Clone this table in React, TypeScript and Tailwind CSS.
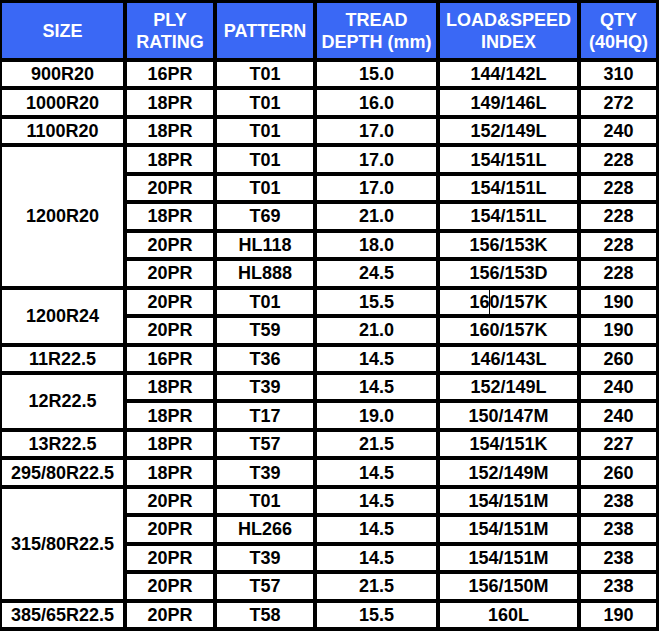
import { Fragment } from 'react';

type Row = { ply: string; pattern: string; tread: string; load: string; qty: string; caret?: boolean };
type Group = { size: string; rows: Row[] };

const groups: Group[] = [
  { size: '900R20', rows: [{ ply: '16PR', pattern: 'T01', tread: '15.0', load: '144/142L', qty: '310' }] },
  { size: '1000R20', rows: [{ ply: '18PR', pattern: 'T01', tread: '16.0', load: '149/146L', qty: '272' }] },
  { size: '1100R20', rows: [{ ply: '18PR', pattern: 'T01', tread: '17.0', load: '152/149L', qty: '240' }] },
  {
    size: '1200R20',
    rows: [
      { ply: '18PR', pattern: 'T01', tread: '17.0', load: '154/151L', qty: '228' },
      { ply: '20PR', pattern: 'T01', tread: '17.0', load: '154/151L', qty: '228' },
      { ply: '18PR', pattern: 'T69', tread: '21.0', load: '154/151L', qty: '228' },
      { ply: '20PR', pattern: 'HL118', tread: '18.0', load: '156/153K', qty: '228' },
      { ply: '20PR', pattern: 'HL888', tread: '24.5', load: '156/153D', qty: '228' },
    ],
  },
  {
    size: '1200R24',
    rows: [
      { ply: '20PR', pattern: 'T01', tread: '15.5', load: '160/157K', qty: '190', caret: true },
      { ply: '20PR', pattern: 'T59', tread: '21.0', load: '160/157K', qty: '190' },
    ],
  },
  { size: '11R22.5', rows: [{ ply: '16PR', pattern: 'T36', tread: '14.5', load: '146/143L', qty: '260' }] },
  {
    size: '12R22.5',
    rows: [
      { ply: '18PR', pattern: 'T39', tread: '14.5', load: '152/149L', qty: '240' },
      { ply: '18PR', pattern: 'T17', tread: '19.0', load: '150/147M', qty: '240' },
    ],
  },
  { size: '13R22.5', rows: [{ ply: '18PR', pattern: 'T57', tread: '21.5', load: '154/151K', qty: '227' }] },
  { size: '295/80R22.5', rows: [{ ply: '18PR', pattern: 'T39', tread: '14.5', load: '152/149M', qty: '260' }] },
  {
    size: '315/80R22.5',
    rows: [
      { ply: '20PR', pattern: 'T01', tread: '14.5', load: '154/151M', qty: '238' },
      { ply: '20PR', pattern: 'HL266', tread: '14.5', load: '154/151M', qty: '238' },
      { ply: '20PR', pattern: 'T39', tread: '14.5', load: '154/151M', qty: '238' },
      { ply: '20PR', pattern: 'T57', tread: '21.5', load: '156/150M', qty: '238' },
    ],
  },
  { size: '385/65R22.5', rows: [{ ply: '20PR', pattern: 'T58', tread: '15.5', load: '160L', qty: '190' }] },
];

const spanClass: Record<number, string> = {
  1: 'row-span-1',
  2: 'row-span-2',
  4: 'row-span-4',
  5: 'row-span-5',
};

function Head({ children }: { children: React.ReactNode }) {
  return (
    <div className="flex items-center justify-center bg-[#3a68f5] text-center text-[18px] font-bold leading-[22px] text-white">
      {children}
    </div>
  );
}

function Cell({ children, className = '' }: { children: React.ReactNode; className?: string }) {
  return (
    <div className={`relative flex items-center justify-center bg-white text-[18px] font-bold leading-none text-black ${className}`}>
      {children}
    </div>
  );
}

export default function App() {
  return (
    <div
      className="grid h-[631px] w-[659px] grid-cols-[121px_86px_96px_119px_137px_75px] grid-rows-[55px_repeat(20,1fr)] gap-x-[4px] gap-y-[4px] bg-black pb-[4px] pl-[2px] pr-[3px] pt-[3px]"
      style={{ fontFamily: '"Liberation Sans", Arial, sans-serif' }}
    >
      {/* Header */}
      <Head>SIZE</Head>
      <Head>PLY<br />RATING</Head>
      <Head>PATTERN</Head>
      <Head>TREAD<br />DEPTH (mm)</Head>
      <Head>LOAD&amp;SPEED<br />INDEX</Head>
      <Head>QTY<br />(40HQ)</Head>

      {/* Body */}
      {groups.map((g) =>
        g.rows.map((r, i) => (
          <Fragment key={`${g.size}-${i}`}>
            {i === 0 && (
              <Cell className={`col-start-1 ${spanClass[g.rows.length]}`}>{g.size}</Cell>
            )}
            <Cell>{r.ply}</Cell>
            <Cell>{r.pattern}</Cell>
            <Cell>{r.tread}</Cell>
            <Cell>
              {r.load}
              {/* text caret left in the screenshot */}
              {r.caret && <span className="absolute left-[49px] top-0 h-[24px] w-px bg-black" />}
            </Cell>
            <Cell>{r.qty}</Cell>
          </Fragment>
        ))
      )}
    </div>
  );
}
